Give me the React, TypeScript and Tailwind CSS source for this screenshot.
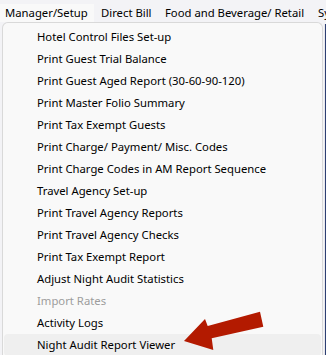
import React from "react";

const items: { label: string; disabled?: boolean; hover?: boolean }[] = [
  { label: "Hotel Control Files Set-up" },
  { label: "Print Guest Trial Balance" },
  { label: "Print Guest Aged Report (30-60-90-120)" },
  { label: "Print Master Folio Summary" },
  { label: "Print Tax Exempt Guests" },
  { label: "Print Charge/ Payment/ Misc. Codes" },
  { label: "Print Charge Codes in AM Report Sequence" },
  { label: "Travel Agency Set-up" },
  { label: "Print Travel Agency Reports" },
  { label: "Print Travel Agency Checks" },
  { label: "Print Tax Exempt Report" },
  { label: "Adjust Night Audit Statistics" },
  { label: "Import Rates", disabled: true },
  { label: "Activity Logs" },
  { label: "Night Audit Report Viewer", hover: true },
];

export default function App() {
  return (
    <div
      className="relative w-[326px] h-[355px] overflow-hidden bg-[#f3f3f6] text-[11.3px] text-black"
      style={{ fontFamily: '"Noto Sans", "Open Sans", sans-serif' }}
    >
      <div className="flex h-[22px] items-end whitespace-nowrap">
        <div className="flex h-[18px] w-[94px] flex-none items-center bg-[#f9f9f9] pl-[5px]">Manager/Setup</div>
        <div className="flex h-[18px] w-[64px] flex-none items-center pl-[7px]">Direct Bill</div>
        <div className="flex h-[18px] w-[158px] flex-none items-center pl-[7px]">Food and Beverage/ Retail</div>
        <div className="flex h-[18px] flex-none items-center pl-[2px]">System</div>
      </div>
      <div className="ml-[2px] w-[321px] rounded-t-[6px] border border-b-0 border-[#d9d9d9] bg-[#f9f9f9] pt-[3px] px-[1px] whitespace-nowrap">
        {items.map((it) => (
          <div
            key={it.label}
            className={`flex h-[22px] items-center rounded-[4px] pl-[33px] ${
              it.hover ? "bg-[#efefef]" : ""
            } ${it.disabled ? "text-[#9d9d9d]" : ""}`}
          >
            {it.label}
          </div>
        ))}
      </div>
      <div className="absolute right-0 top-[24px] bottom-0 w-[2px] bg-[#e9e9ec]">
        <div className="ml-[1px] h-full w-[1px] bg-[#2d3f73]" />
      </div>
      <svg className="absolute left-0 top-0" width="326" height="355" viewBox="0 0 326 355">
        <polygon
          points="184,341 205,319 207.7,326 260,311.7 263.3,326.7 211.7,338.3 213.3,350"
          fill="#b31a00"
        />
      </svg>
    </div>
  );
}
